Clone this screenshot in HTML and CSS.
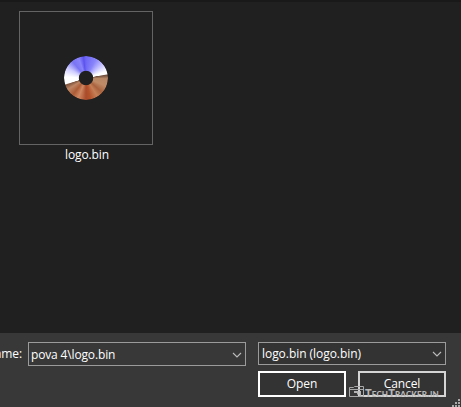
FILE: index.html
```html
<!DOCTYPE html>
<html lang="en">
<head>
<meta charset="utf-8">
<title>Open</title>
<link rel="stylesheet" href="styles.css">
</head>
<body>
<main class="files">
  <figure class="file">
    <div class="thumb"><div class="disc"></div></div>
    <figcaption>logo.bin</figcaption>
  </figure>
</main>
<footer class="panel">
  <div class="row">
    <span class="label">ame:</span>
    <div class="field name"><span>pova 4\logo.bin</span>
      <svg class="chev" width="10" height="6" viewBox="0 0 10 6"><path d="M1 1l4 4 4-4"/></svg></div>
    <div class="field type"><span>logo.bin (logo.bin)</span>
      <svg class="chev" width="10" height="6" viewBox="0 0 10 6"><path d="M1 1l4 4 4-4"/></svg></div>
  </div>
  <div class="actions">
    <div class="btn open">Open</div>
    <div class="btn cancel">Cancel</div>
  </div>
  <div class="mark">
    <svg width="15" height="12" viewBox="0 0 15 12"><path class="line" d="M.5 1.500V10.500H14.500V.500H5.500L4.500 1.500zM1 3.500h13"/><path class="fill" d="M5 5h4.500v3.500H8V7H5zM10.500 5H12v5h-1.500z"/></svg>
    <span>TechTracker.in</span>
  </div>
  <svg class="grip" width="9" height="8" viewBox="0 0 9 8"><path d="M6 0h2v2H6zM3 3h2v2H3zM6 3h2v2H6zM0 6h2v2H0zM3 6h2v2H3zM6 6h2v2H6z"/></svg>
</footer>
</body>
</html>
```

FILE: styles.css
```css
* { box-sizing: border-box; }
body {
  margin: 0;
  width: 461px;
  height: 407px;
  overflow: hidden;
  display: flex;
  flex-direction: column;
  background: #202020;
  color: #fff;
  font: 12px/16px "Open Sans", "Noto Sans", sans-serif;
  letter-spacing: -.1px;
  white-space: nowrap;
}
.files {
  height: 333px;
  padding: 9px 0 0 19px;
  border-top: 2px solid #191919;
}
.file { width: 134px; margin: 0; }
.thumb {
  height: 134px;
  border: 1px solid #646464;
  display: grid;
  place-items: center;
}
.disc {
  width: 44px;
  height: 44px;
  border-radius: 50%;
  background: conic-gradient(#6e67f5 0deg, #8985fa 28deg, #c9c6ff 52deg, #fff 72deg, #fff 79deg, #71503f 82deg, #b98865 92deg, #c08a66 112deg, #a9623d 132deg, #c58057 148deg, #b4532c 168deg, #a94c2b 180deg, #cf8862 201deg, #ac5c37 218deg, #bd8564 238deg, #80563e 251deg, #fff 254deg, #fff 273deg, #ceccff 298deg, #7974f3 321deg, #8984fa 340deg, #5c52ee 353deg, #6e67f5 360deg);
  -webkit-mask: radial-gradient(circle, transparent 6.8px, #000 7.6px);
  mask: radial-gradient(circle, transparent 6.8px, #000 7.6px);
}
figcaption { margin: 2px 0 0 2px; text-align: center; }
.panel {
  position: relative;
  height: 74px;
  padding-top: 9px;
  background: #383838;
}
.row { display: flex; align-items: flex-start; }
.label {
  display: flex;
  justify-content: flex-end;
  width: 28px;
  padding: 4px 6px 0 0;
}
.field {
  display: flex;
  justify-content: space-between;
  align-items: center;
  border: 1px solid #9b9b9b;
}
.name { width: 218px; height: 24px; padding: 1px 3px 0 2px; letter-spacing: -.15px; }
.type { width: 188px; height: 23px; margin-left: 12px; padding: 0 3px; background: #333; letter-spacing: -.05px; }
.chev { fill: none; stroke: #bcbcbc; stroke-width: 1.1; }
.actions { display: flex; gap: 12px; margin: 5px 0 0 258px; }
.btn {
  width: 88px;
  height: 26px;
  line-height: 22px;
  text-align: center;
  background: #333;
}
.open { border: 2px solid #fff; }
.cancel { border: 2px solid #d5d5d5; }
.mark {
  position: absolute;
  left: 349px;
  top: 53px;
  display: flex;
  align-items: flex-end;
  gap: 1px;
  color: #b8b8b8;
  font: small-caps 900 11px/9px Lato, sans-serif;
  letter-spacing: .15px;
}
.mark span { margin-bottom: 1px; }
.mark .line { fill: none; stroke: #a9a9a9; }
.mark .fill { fill: #b4b4b4; }
.grip { position: absolute; right: 0; bottom: 0; fill: #a9a9a9; }
```
